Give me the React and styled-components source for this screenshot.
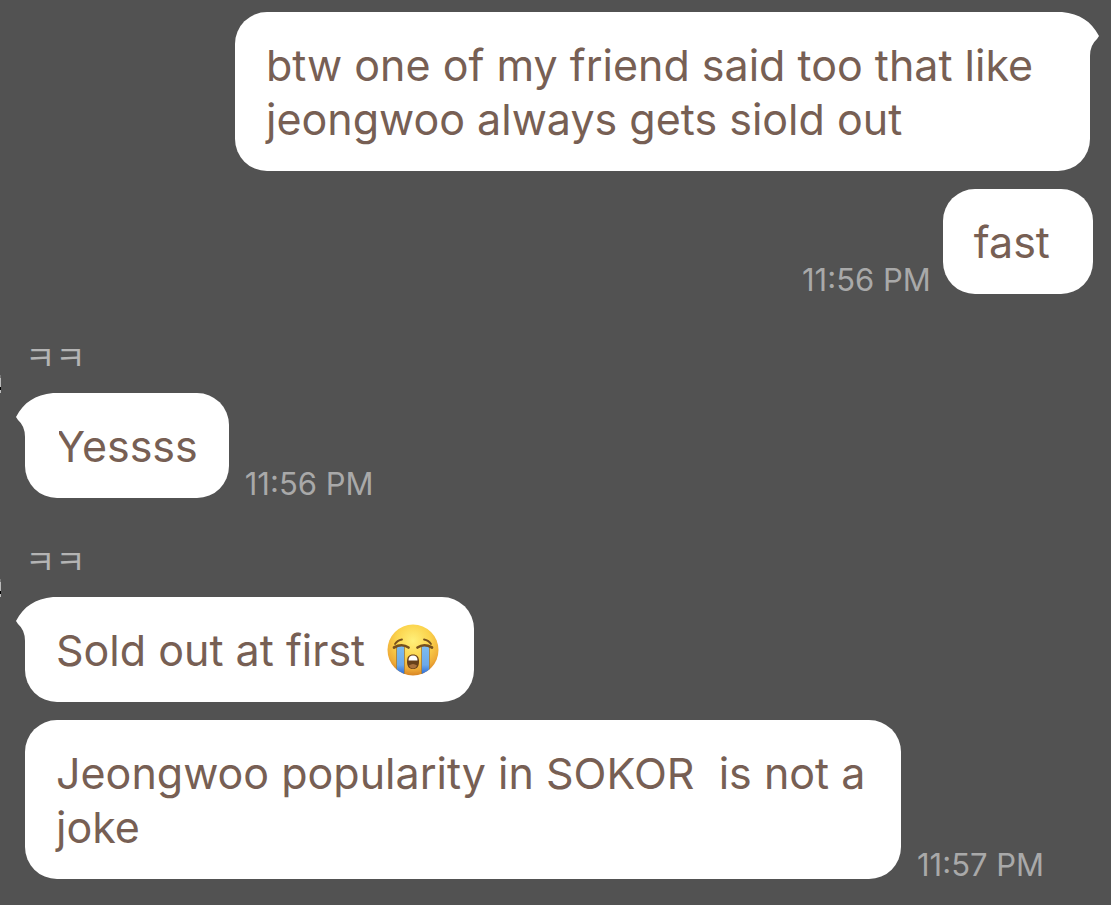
import React from "react";
import styled, { createGlobalStyle, css } from "styled-components";

const GlobalStyle = createGlobalStyle`
  * { box-sizing: border-box; }
  body {
    margin: 0;
    background: #525252;
    font-family: Inter, "Noto Sans CJK KR", sans-serif;
  }
`;

const Chat = styled.main`
  display: flex;
  flex-direction: column;
  gap: 42px;
  min-height: 100vh;
  padding: 12px 18px 26px 25px;
  overflow: hidden;
  background: #525252;
`;

const Group = styled.section`
  position: relative;
  display: flex;
  flex-direction: column;
  gap: 18px;
`;

const Row = styled.div`
  display: flex;
  align-items: flex-end;
  gap: ${(p) => (p.$sent ? "12px" : "16px")};
  justify-content: ${(p) => (p.$sent ? "flex-end" : "flex-start")};
  padding-right: ${(p) => (p.$inset ? "3px" : "0")};
`;

const Bubble = styled.p`
  position: relative;
  margin: 0;
  max-width: ${(p) => (p.$sent ? "855px" : "876px")};
  padding: 26px 31px 25px;
  border-radius: 32px;
  ${(p) => p.$tail === "left" && css`border-top-left-radius: 0;`}
  ${(p) => p.$tail === "right" && css`border-top-right-radius: 0;`}
  background: #fff;
  color: #775f54;
  font-size: 43px;
  line-height: 54px;
  white-space: pre-wrap;
`;

const TailShape = styled.svg`
  position: absolute;
  top: 0;
  width: 44px;
  height: 44px;
  ${(p) => (p.$side === "left" ? "left: -10px;" : "right: -10px; transform: scaleX(-1);")}
`;

const Time = styled.time`
  color: #a9a9a9;
  font-size: 31px;
  line-height: 28px;
  white-space: nowrap;
`;

const Sender = styled.h2`
  margin: 0 0 -9px;
  color: #b4b4b4;
  font-family: "Noto Sans CJK KR", sans-serif;
  font-size: 33px;
  font-weight: 400;
  line-height: 40px;
  padding-bottom: 8px;
`;

const Avatar = styled.span`
  position: absolute;
  left: -25px;
  top: 39px;
  width: 1px;
  height: 18px;
  background: linear-gradient(#777 0 3px, #bbb 3px 12px, #000 12px 15px, #bbb 15px);
`;

const EmojiSvg = styled.svg`
  display: inline-block;
  width: 52px;
  height: 52px;
  margin: 0 4px 0 10px;
  vertical-align: -10px;
`;

function Tail({ side }) {
  return (
    <TailShape $side={side} viewBox="0 0 44 44" aria-hidden="true">
      <path d="M0 0H44V1H42C23 1 11 8 1 25Q1 27 3 28Q10 34 10 44H0Z" fill="#525252" />
      <path d="M44 0H38C20 2 9 9 1 24L3 27Q10 33 10 44H44Z" fill="#fff" />
    </TailShape>
  );
}

function CryingFace() {
  return (
    <EmojiSvg viewBox="0 0 52 52" role="img" aria-label="Loudly crying face">
      <defs>
        <radialGradient id="face" cx="50%" cy="32%" r="68%">
          <stop offset="0" stopColor="#fff07a" />
          <stop offset=".5" stopColor="#fbd34c" />
          <stop offset=".82" stopColor="#efac38" />
          <stop offset="1" stopColor="#d98524" />
        </radialGradient>
        <linearGradient id="tear" x1="0" y1="0" x2="0" y2="1">
          <stop offset="0" stopColor="#7dbcee" />
          <stop offset=".65" stopColor="#6ca9ea" />
          <stop offset="1" stopColor="#2666d5" />
        </linearGradient>
        <clipPath id="head"><circle cx="26" cy="26" r="25.5" /></clipPath>
      </defs>
      <circle cx="26" cy="26" r="25.5" fill="url(#face)" />
      <g clipPath="url(#head)">
        <path d="M9.500 22h8v29h-8zM34.500 22h8v29h-8z" fill="url(#tear)" />
        <path d="M9.500 23v26M17.500 23v28M34.500 23v28M42.500 23v26" stroke="#a9823b" strokeWidth=".9" />
      </g>
      <g fill="none" stroke="#76501c" strokeLinecap="round">
        <path d="M8 20Q10 16.500 15 15.500M37 15.500Q42 16.500 44 20" strokeWidth="1.800" />
        <path d="M7 23.500Q15 19 21.500 23.500M30.500 23.500Q37 19 45 23.500" strokeWidth="2.700" />
      </g>
      <path d="M26 30.500c-4 0-6 2.500-6 7 0 5 2 7.500 6 7.500s6-2.500 6-7.500c0-4.500-2-7-6-7Z" fill="#68401a" />
      <path d="M21.500 36.500c0-3.500 1.500-5 4.500-5s4.500 1.500 4.500 5Z" fill="#fff" />
      <path d="M22 41.500q4-3 8 0-1 3-4 3t-4-3Z" fill="#aa713d" />
    </EmojiSvg>
  );
}

export default function App() {
  return (
    <>
      <GlobalStyle />
      <Chat>
        <Group>
          <Row $sent $inset>
            <Bubble $sent $tail="right">
              <Tail side="right" />
              btw one of my friend said too that like jeongwoo always gets siold out
            </Bubble>
          </Row>
          <Row $sent>
            <Time>11:56 PM</Time>
            <Bubble $sent>{"fast\u00a0"}</Bubble>
          </Row>
        </Group>
        <Group>
          <Avatar />
          <Sender>ㅋㅋ</Sender>
          <Row>
            <Bubble $tail="left"><Tail side="left" />Yessss</Bubble>
            <Time>11:56 PM</Time>
          </Row>
        </Group>
        <Group>
          <Avatar />
          <Sender>ㅋㅋ</Sender>
          <Row>
            <Bubble $tail="left"><Tail side="left" />Sold out at first <CryingFace /></Bubble>
          </Row>
          <Row>
            <Bubble>{"Jeongwoo popularity in SOKOR  is not a joke"}</Bubble>
            <Time>11:57 PM</Time>
          </Row>
        </Group>
      </Chat>
    </>
  );
}
